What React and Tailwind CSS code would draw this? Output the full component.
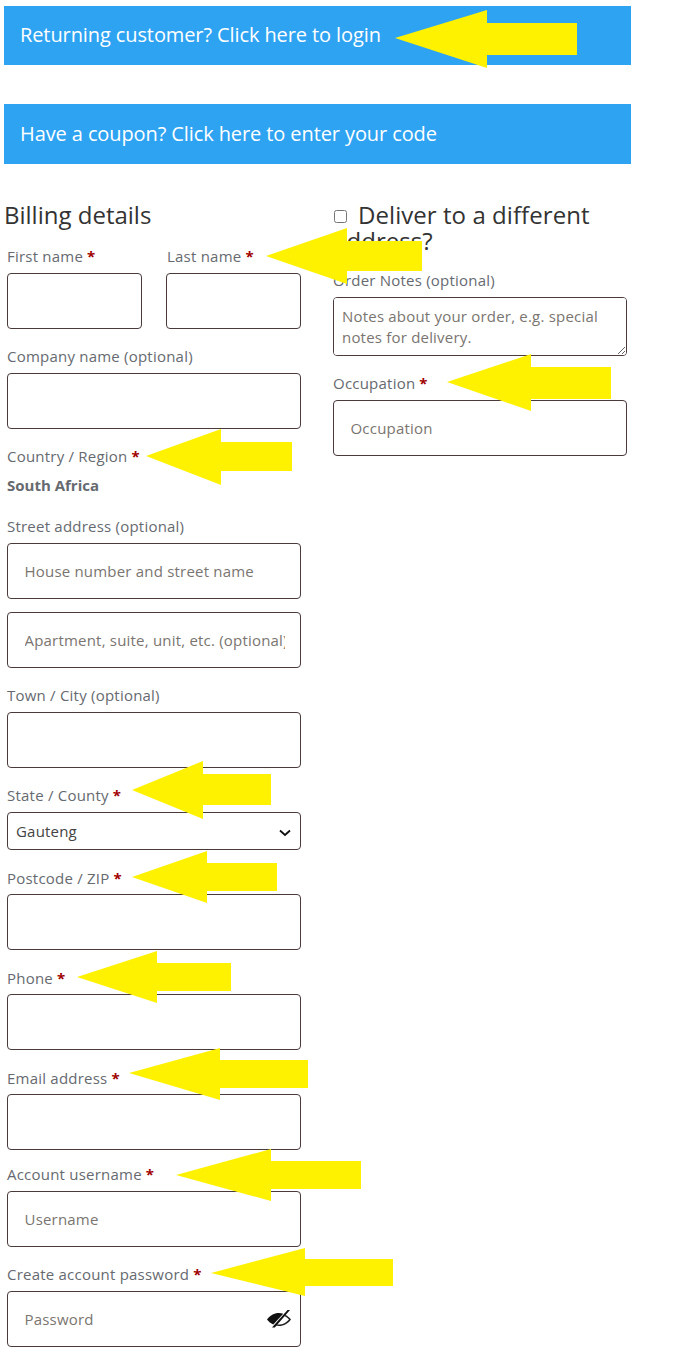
const arrows = [
  { tip: [395, 38], head: 487, top: 10, bottom: 68, end: 577, y1: 23, y2: 55 },
  { tip: [266, 256], head: 347, top: 228, bottom: 284, end: 422, y1: 241, y2: 271 },
  { tip: [447, 382], head: 531, top: 354, bottom: 411, end: 611, y1: 367, y2: 399 },
  { tip: [146, 456], head: 221, top: 429, bottom: 485, end: 292, y1: 442, y2: 471 },
  { tip: [132, 790], head: 203, top: 761, bottom: 819, end: 271, y1: 774, y2: 805 },
  { tip: [132, 877], head: 207, top: 851, bottom: 903, end: 277, y1: 863, y2: 891 },
  { tip: [77, 977], head: 157, top: 951, bottom: 1003, end: 231, y1: 963, y2: 991 },
  { tip: [129, 1073], head: 220, top: 1048, bottom: 1100, end: 308, y1: 1060, y2: 1088 },
  { tip: [176, 1175], head: 271, top: 1149, bottom: 1201, end: 361, y1: 1161, y2: 1189 },
  { tip: [211, 1273], head: 305, top: 1248, bottom: 1296, end: 393, y1: 1259, y2: 1286 },
];

function Label({ text, required, className = "" }) {
  return (
    <div className={`h-6 text-[15px] leading-6 tracking-[0.22px] text-[#666a70] ${className}`}>
      {text}
      {required && <b className="ml-1 text-[#a00000]">*</b>}
    </div>
  );
}

function Input({ placeholder, className = "" }) {
  return (
    <input
      placeholder={placeholder}
      className={`block h-14 w-full rounded-[4px] border border-[#4a3a3a] bg-white pl-[16.5px] pr-[15px] text-[15px] tracking-[0.2px] placeholder:text-[#7a7570] ${className}`}
    />
  );
}

function EyeHidden() {
  return (
    <svg viewBox="0 0 26 20" className="absolute right-[9px] top-[18px] h-5 w-[26px]" fill="#111">
      <path d="M1 10.500C4 6.500 8 4 13 4c1.500 0 2.900.2 4.200.7L7.300 15.500C4.800 14.500 2.700 12.700 1 10.500z" />
      <path d="M19.500 6c2.200 1 4 2.500 5.500 4.500-3 4-7 6.500-12 6.500-1.200 0-2.300-.15-3.400-.45l1.100-1.250c.7.130 1.500.2 2.300.2 4 0 7.400-1.900 10-5-1.300-1.500-2.800-2.700-4.600-3.500z" fill="#222" />
      <path d="M21.500 1 6 18.500H8.800L24 1z" />
    </svg>
  );
}

function Chevron() {
  return (
    <svg viewBox="0 0 12 8" className="pointer-events-none absolute right-[10px] top-[17px] h-2 w-3" fill="none" stroke="#111" strokeWidth="1.800">
      <path d="M1 1.500 6 6l5-4.500" />
    </svg>
  );
}

export default function App() {
  return (
    <div className="relative h-[1359px] overflow-hidden bg-white pl-1 pt-[6px] font-['Open_Sans',sans-serif]">

      <div className="flex h-[59px] w-[627px] items-center bg-[#2ea3f2] pb-[2px] pl-[16px] text-[20px] tracking-[-0.1px] text-white">
        Returning customer? Click here to login
      </div>

      <div className="mt-[39px] flex h-[60px] w-[627px] items-center bg-[#2ea3f2] pl-[16px] text-[20px] tracking-[-0.1px] text-white">
        Have a coupon? Click here to enter your code
      </div>

      <div className="mt-[38px] flex">

        <div className="w-[329px]">
          <h3 className="-mt-px h-[28px] text-[24px] leading-[28px] text-[#333]">
            Billing details
          </h3>

          <div className="ml-[3px] w-[294px]">
            <div className="mt-[15px] flex gap-6">
              <div className="w-[135px]">
                <Label text="First name" required className="mb-[5px]" />
                <Input />
              </div>
              <div className="w-[135px]">
                <Label text="Last name" required className="mb-[5px] pl-px" />
                <Input />
              </div>
            </div>

            <Label text="Company name (optional)" className="mb-[5px] mt-[15px]" />
            <Input />

            <Label text="Country / Region" required className="mt-[15px]" />
            <div className="mt-[5px] h-6 text-[15px] font-bold leading-6 text-[#666a70]">
              South Africa
            </div>

            <Label text="Street address (optional)" className="mb-[5px] mt-[17px]" />
            <Input placeholder="House number and street name" />
            <Input placeholder="Apartment, suite, unit, etc. (optional)" className="mt-[13px]" />

            <Label text="Town / City (optional)" className="mb-[5px] mt-[15px]" />
            <Input />

            <Label text="State / County" required className="mb-[5px] mt-[15px]" />
            <div className="relative">
              <select className="block h-[38px] w-full appearance-none rounded-[4px] border border-[#4a3a3a] bg-white px-2 text-[15px] tracking-[0.2px] text-[#444]">
                <option>Gauteng</option>
              </select>
              <Chevron />
            </div>

            <Label text="Postcode / ZIP" required className="mb-1 mt-4" />
            <Input />

            <Label text="Phone" required className="mb-1 mt-4" />
            <Input />

            <Label text="Email address" required className="mb-1 mt-4" />
            <Input />

            <Label text="Account username" required className="mb-[5px] mt-3" />
            <Input placeholder="Username" />

            <Label text="Create account password" required className="mb-[5px] mt-[15px]" />
            <div className="relative">
              <Input placeholder="Password" />
              <EyeHidden />
            </div>
          </div>

          <h3 className="mt-2 text-[24px] leading-[28px] text-[#333]">
            Your order
          </h3>
        </div>

        <div className="w-[294px]">
          <h3 className="h-[53px] text-[24px] leading-[26px] tracking-[0.06px] text-[#333]">
            <input type="checkbox" className="ml-px mr-[11px] inline-block align-[1px]" />
            Deliver to a different address?
          </h3>

          <Label text="Order Notes (optional)" className="mb-[5px] mt-[13px]" />
          <textarea
            rows={2}
            placeholder="Notes about your order, e.g. special notes for delivery."
            className="block h-[59px] w-full rounded-[4px] border border-[#4a3a3a] bg-white p-2 text-[15px] leading-[21px] tracking-[0.2px] placeholder:text-[#7a7570]"
          />

          <Label text="Occupation" required className="mb-[5px] mt-[15px]" />
          <Input placeholder="Occupation" />
        </div>

      </div>

      {arrows.map((a) => (
        <svg
          key={a.tip[1]}
          className="pointer-events-none absolute left-0 top-0"
          width="675"
          height="1359"
        >
          <polygon
            fill="#fff200"
            points={`${a.tip[0]},${a.tip[1]} ${a.head},${a.top} ${a.head},${a.y1} ${a.end},${a.y1} ${a.end},${a.y2} ${a.head},${a.y2} ${a.head},${a.bottom}`}
          />
        </svg>
      ))}

    </div>
  );
}
